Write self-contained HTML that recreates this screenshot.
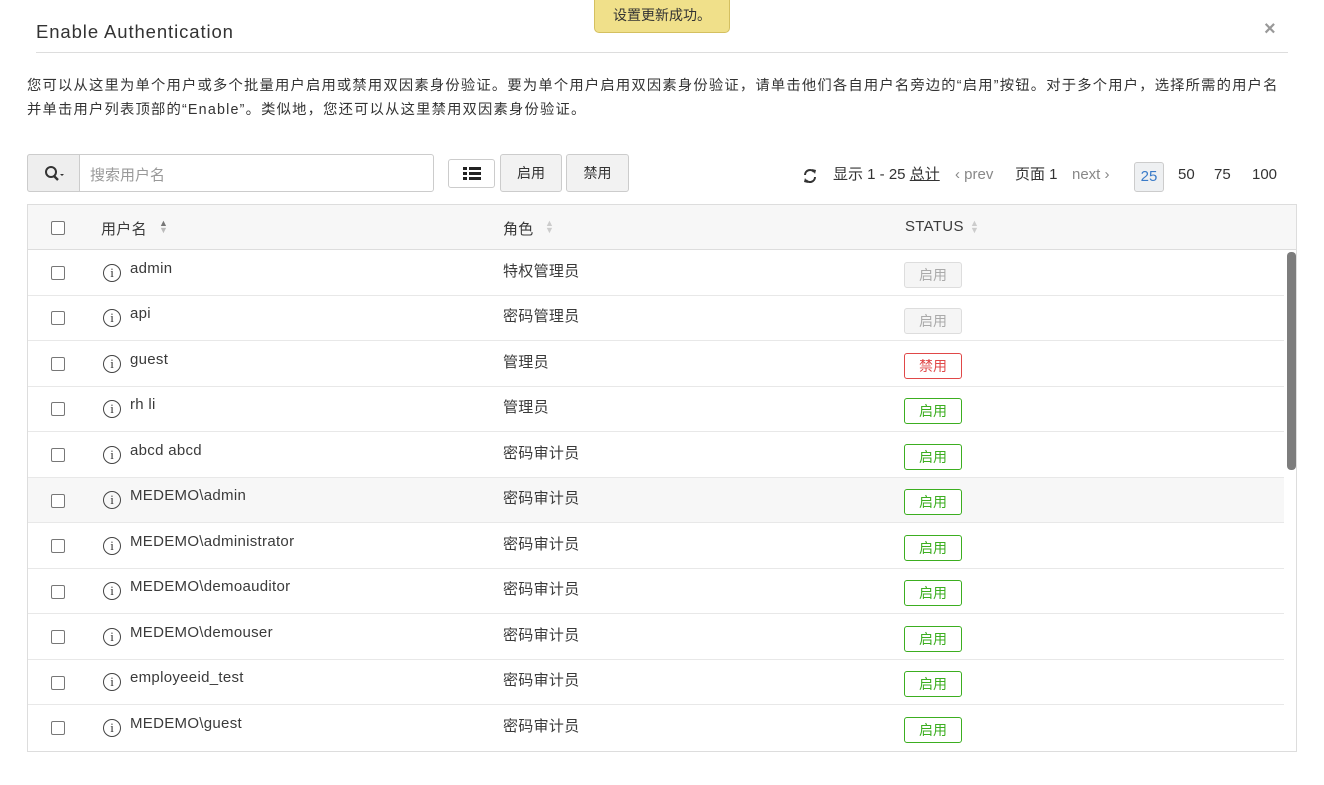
<!DOCTYPE html>
<html><head><meta charset="utf-8"><style>
*{box-sizing:border-box;margin:0;padding:0}
body{width:1324px;height:785px;background:#fff;font-family:"Liberation Sans","Noto Sans CJK SC",sans-serif;color:#333;position:relative;overflow:hidden;font-size:14px}
.abs{position:absolute}
.title{left:36px;top:21px;font-size:18.5px;color:#333;letter-spacing:0.9px}
.hr{left:36px;top:52px;width:1252px;height:1px;background:#ddd}
.close{left:1264px;top:18px;font-size:20px;color:#999;font-weight:bold}
.toast{left:594px;top:0;width:136px;height:33px;background:#f0e08a;border:1px solid #d4c060;border-top:none;border-radius:0 0 5px 5px;font-size:14px;text-align:center;line-height:30px;color:#333}
.desc{left:27px;top:74px;width:1295px;font-size:14.3px;line-height:24px;color:#333;letter-spacing:1.2px;white-space:nowrap}
.search{left:27px;top:154px;width:407px;height:38px;border:1px solid #ccc;border-radius:3px}
.sbtn{left:27px;top:154px;width:53px;height:38px;background:#eee;border:1px solid #ccc;border-radius:3px 0 0 3px}
.btn{height:38px;border:1px solid #ccc;border-radius:3px;background:#f2f2f2;text-align:center;line-height:36px;font-size:14px}
.pg{top:166px;font-size:15px;color:#333;line-height:18px}
.table{left:27px;top:204px;width:1270px;height:548px;border:1px solid #ddd}
.head{left:28px;top:205px;width:1268px;height:45px;background:#f7f7f7;border-bottom:1px solid #ddd}
.row{left:28px;width:1256px;height:45.5px;border-bottom:1px solid #e8e8e8}
.cb{width:14px;height:14px;border:1px solid #777;border-radius:2px;background:#fff}
.cell{font-size:15px;color:#3a3a3a;letter-spacing:0.3px}
.badge{width:58px;height:26px;border-radius:3px;text-align:center;line-height:24px;font-size:14px}
.info{width:18px;height:18px;border:1.3px solid #444;border-radius:50%;font-family:"Liberation Serif",serif;font-size:13px;text-align:center;line-height:16px;color:#333}
</style></head><body>
<div class="abs title">Enable Authentication</div>
<div class="abs close">×</div>
<div class="abs hr"></div>
<div class="abs toast">设置更新成功。</div>
<div class="abs desc">您可以从这里为单个用户或多个批量用户启用或禁用双因素身份验证。要为单个用户启用双因素身份验证，请单击他们各自用户名旁边的“启用”按钮。对于多个用户，选择所需的用户名<br>并单击用户列表顶部的“Enable”。类似地，您还可以从这里禁用双因素身份验证。</div>
<div class="abs search"></div>
<div class="abs sbtn"><svg width="53" height="38"><circle cx="23" cy="17" r="5" fill="none" stroke="#333" stroke-width="2"/><path d="M26 21l4 4" stroke="#333" stroke-width="2.4"/><path d="M32 19l2 2 2-2z" fill="#333"/></svg></div>
<div class="abs" style="left:90px;top:164px;font-size:15px;color:#999">搜索用户名</div>
<div class="abs btn" style="left:448px;top:159px;width:47px;height:29px;background:#fff;line-height:27px"><svg width="18" height="14" style="margin-top:7px"><rect x="0" y="0" width="4" height="3" fill="#222"/><rect x="6" y="0" width="12" height="3" fill="#222"/><rect x="0" y="5" width="4" height="3" fill="#222"/><rect x="6" y="5" width="12" height="3" fill="#222"/><rect x="0" y="10" width="4" height="3" fill="#222"/><rect x="6" y="10" width="12" height="3" fill="#222"/></svg></div>
<div class="abs btn" style="left:500px;top:154px;width:62px">启用</div>
<div class="abs btn" style="left:566px;top:154px;width:63px">禁用</div>
<div class="abs pg" style="left:802px;top:167px"><svg width="16" height="18"><path d="M3 8a5 5 0 0 1 9-3M13 10a5 5 0 0 1-9 3" stroke="#333" stroke-width="2" fill="none"/><path d="M10 2l4 1-1 4zM6 16l-4-1 1-4z" fill="#333"/></svg></div>
<div class="abs pg" style="left:833px">显示 1 - 25 <span style="text-decoration:underline">总计</span></div>
<div class="abs pg" style="left:955px;color:#888">‹ prev</div>
<div class="abs pg" style="left:1015px">页面 1</div>
<div class="abs pg" style="left:1072px;color:#888">next ›</div>
<div class="abs" style="left:1134px;top:162px;width:30px;height:30px;border:1px solid #ccc;border-radius:3px;background:#eef0f2;color:#3a7bc8;font-size:15px;text-align:center;line-height:28px">25</div>
<div class="abs pg" style="left:1178px">50</div>
<div class="abs pg" style="left:1214px">75</div>
<div class="abs pg" style="left:1252px">100</div>
<div class="abs table"></div>
<div class="abs head"></div>
<div class="abs cb" style="left:51px;top:221px"></div>
<div class="abs cell" style="left:101px;top:218px">用户名</div>
<div class="abs" style="left:159px;top:220px;font-size:9px;line-height:7px;color:#777">▲<br><span style="color:#bbb">▼</span></div>
<div class="abs cell" style="left:503px;top:218px">角色</div>
<div class="abs" style="left:545px;top:220px;font-size:9px;line-height:7px;color:#ccc">▲<br>▼</div>
<div class="abs cell" style="left:905px;top:218px">STATUS</div>
<div class="abs" style="left:970px;top:220px;font-size:9px;line-height:7px;color:#ccc">▲<br>▼</div>
<div class="abs" style="left:1287px;top:252px;width:9px;height:218px;background:#7d7d7d;border-radius:4px"></div>
<div class="abs row" style="top:250px"></div><div class="abs cb" style="left:51px;top:266px"></div><div class="abs info" style="left:103px;top:264px">i</div><div class="abs cell" style="left:130px;top:260px">admin</div><div class="abs cell" style="left:503px;top:260px">特权管理员</div><div class="abs badge" style="left:904px;top:262px;border:1px solid #ddd;background:#f5f5f5;color:#aaa">启用</div>
<div class="abs row" style="top:295.5px"></div><div class="abs cb" style="left:51px;top:311px"></div><div class="abs info" style="left:103px;top:309px">i</div><div class="abs cell" style="left:130px;top:305px">api</div><div class="abs cell" style="left:503px;top:305px">密码管理员</div><div class="abs badge" style="left:904px;top:308px;border:1px solid #ddd;background:#f5f5f5;color:#aaa">启用</div>
<div class="abs row" style="top:341px"></div><div class="abs cb" style="left:51px;top:357px"></div><div class="abs info" style="left:103px;top:355px">i</div><div class="abs cell" style="left:130px;top:351px">guest</div><div class="abs cell" style="left:503px;top:351px">管理员</div><div class="abs badge" style="left:904px;top:353px;border:1px solid #e04848;color:#e04848">禁用</div>
<div class="abs row" style="top:386.5px"></div><div class="abs cb" style="left:51px;top:402px"></div><div class="abs info" style="left:103px;top:400px">i</div><div class="abs cell" style="left:130px;top:396px">rh li</div><div class="abs cell" style="left:503px;top:396px">管理员</div><div class="abs badge" style="left:904px;top:398px;border:1px solid #3cae20;color:#3cae20">启用</div>
<div class="abs row" style="top:432px"></div><div class="abs cb" style="left:51px;top:448px"></div><div class="abs info" style="left:103px;top:446px">i</div><div class="abs cell" style="left:130px;top:442px">abcd abcd</div><div class="abs cell" style="left:503px;top:442px">密码审计员</div><div class="abs badge" style="left:904px;top:444px;border:1px solid #3cae20;color:#3cae20">启用</div>
<div class="abs row" style="top:477.5px;background:#f7f7f7"></div><div class="abs cb" style="left:51px;top:494px"></div><div class="abs info" style="left:103px;top:491px">i</div><div class="abs cell" style="left:130px;top:487px">MEDEMO\admin</div><div class="abs cell" style="left:503px;top:487px">密码审计员</div><div class="abs badge" style="left:904px;top:489px;border:1px solid #3cae20;color:#3cae20;background:#fff">启用</div>
<div class="abs row" style="top:523px"></div><div class="abs cb" style="left:51px;top:539px"></div><div class="abs info" style="left:103px;top:537px">i</div><div class="abs cell" style="left:130px;top:533px">MEDEMO\administrator</div><div class="abs cell" style="left:503px;top:533px">密码审计员</div><div class="abs badge" style="left:904px;top:535px;border:1px solid #3cae20;color:#3cae20">启用</div>
<div class="abs row" style="top:568.5px"></div><div class="abs cb" style="left:51px;top:585px"></div><div class="abs info" style="left:103px;top:582px">i</div><div class="abs cell" style="left:130px;top:578px">MEDEMO\demoauditor</div><div class="abs cell" style="left:503px;top:578px">密码审计员</div><div class="abs badge" style="left:904px;top:580px;border:1px solid #3cae20;color:#3cae20">启用</div>
<div class="abs row" style="top:614px"></div><div class="abs cb" style="left:51px;top:630px"></div><div class="abs info" style="left:103px;top:628px">i</div><div class="abs cell" style="left:130px;top:624px">MEDEMO\demouser</div><div class="abs cell" style="left:503px;top:624px">密码审计员</div><div class="abs badge" style="left:904px;top:626px;border:1px solid #3cae20;color:#3cae20">启用</div>
<div class="abs row" style="top:659.5px"></div><div class="abs cb" style="left:51px;top:676px"></div><div class="abs info" style="left:103px;top:673px">i</div><div class="abs cell" style="left:130px;top:669px">employeeid_test</div><div class="abs cell" style="left:503px;top:669px">密码审计员</div><div class="abs badge" style="left:904px;top:671px;border:1px solid #3cae20;color:#3cae20">启用</div>
<div class="abs row" style="top:705px;border-bottom:none"></div><div class="abs cb" style="left:51px;top:721px"></div><div class="abs info" style="left:103px;top:719px">i</div><div class="abs cell" style="left:130px;top:715px">MEDEMO\guest</div><div class="abs cell" style="left:503px;top:715px">密码审计员</div><div class="abs badge" style="left:904px;top:717px;border:1px solid #3cae20;color:#3cae20">启用</div>
</body></html>
